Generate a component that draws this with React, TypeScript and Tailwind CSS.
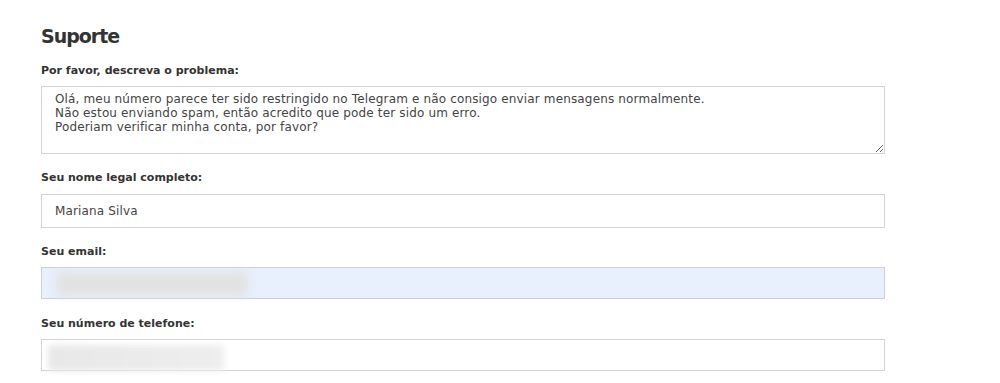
import React, { useState } from 'react';

const font = 'font-["DejaVu_Sans",sans-serif]';

export default function App() {
  const [problem, setProblem] = useState(
    'Olá, meu número parece ter sido restringido no Telegram e não consigo enviar mensagens normalmente.\nNão estou enviando spam, então acredito que pode ter sido um erro.\nPoderiam verificar minha conta, por favor?'
  );
  const [name, setName] = useState('Mariana Silva');

  return (
    <div className={`min-h-[383px] bg-white pl-[41px] pt-[24px] text-[#333] ${font}`}>
      <div className="w-[844px]">
        <h1 className="mb-4 text-[19px] font-bold leading-[24px] tracking-[-1px] text-[#333]">Suporte</h1>

        {/* descrição */}
        <div className="mb-[17px]">
          <label className="mb-2 block text-[11px] font-bold leading-[14px]">Por favor, descreva o problema:</label>
          <textarea
            value={problem}
            onChange={(e) => setProblem(e.target.value)}
            className={`block h-[68px] w-full border border-[#d4d4d4] bg-white px-[13px] py-[5px] text-[12px] leading-[14px] tracking-[0.15px] text-[#444] outline-none ${font}`}
          />
        </div>

        {/* nome */}
        <div className="mb-[17px]">
          <label className="mb-[9px] block text-[11px] font-bold leading-[14px]">Seu nome legal completo:</label>
          <input
            value={name}
            onChange={(e) => setName(e.target.value)}
            className={`block h-[34px] w-full border border-[#d4d4d4] bg-white px-[13px] text-[12px] tracking-[0.15px] text-[#444] outline-none ${font}`}
          />
        </div>

        {/* email */}
        <div className="mb-[18px]">
          <label className="mb-2 block text-[11px] font-bold leading-[14px]">Seu email:</label>
          <div className="relative h-[32px] w-full border border-[#d0d0d0] bg-[#e8f0fe]">
            <div className="absolute left-[14px] top-[4px] h-[24px] w-[192px] rounded-[4px] bg-[#e2e2e2] blur-[4px]" />
          </div>
        </div>

        {/* telefone */}
        <div>
          <label className="mb-2 block text-[11px] font-bold leading-[14px]">Seu número de telefone:</label>
          <div className="relative h-[32px] w-full border border-[#d4d4d4] bg-white">
            <div className="absolute left-[6px] top-[5px] h-[26px] w-[176px] rounded-[3px] bg-gradient-to-r from-[#e8e8e8] to-[#eeeeee] blur-[3px]" />
          </div>
        </div>
      </div>
    </div>
  );
}
